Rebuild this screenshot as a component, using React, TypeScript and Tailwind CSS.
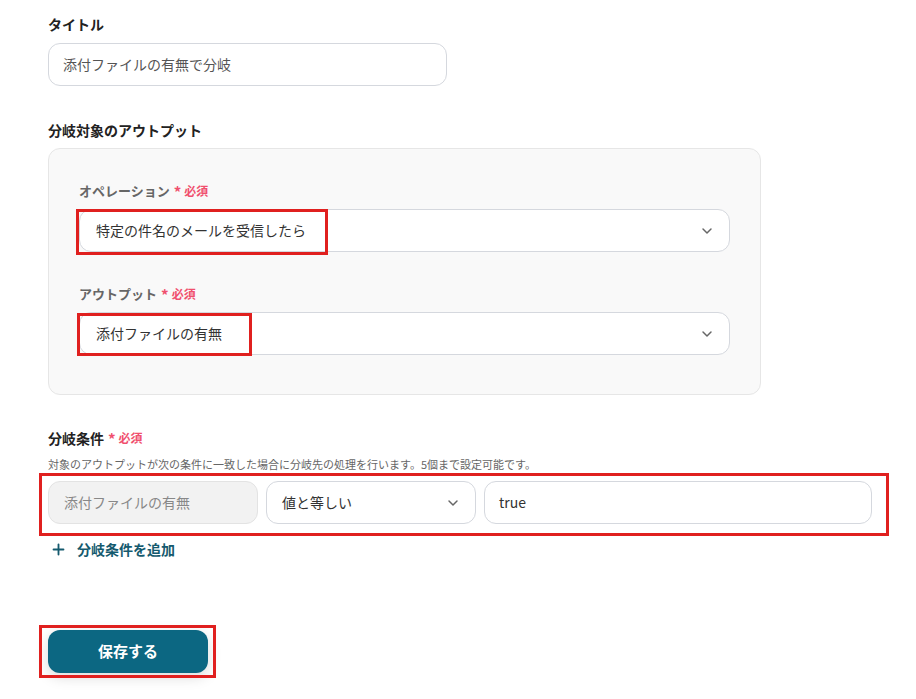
import { ChevronDown, Plus } from "lucide-react";

const font = { fontFamily: '"Noto Sans CJK JP", "Noto Sans", sans-serif' };

function Required() {
  return (
    <span className="ml-1 inline-flex items-center text-[12px] font-bold text-[#f0506e]">
      <span className="mr-[3px] text-[15px] leading-none">*</span>必須
    </span>
  );
}

function Select({ value, box }: { value: string; box: string }) {
  return (
    <div className="relative mt-2 flex h-[43px] w-[651px] items-center justify-between rounded-xl border border-[#d5d8de] bg-white pl-4 pr-[14px]">
      <span className="text-[14px] text-[#333]">{value}</span>
      <ChevronDown size={16} strokeWidth={2.2} className="text-[#666]" />
      <div className={`pointer-events-none absolute border-[3px] border-[#e0201f] ${box}`} />
    </div>
  );
}

export default function App() {
  return (
    <div className="min-h-screen bg-white pl-12 pt-[14px]" style={font}>
      <p className="text-[14px] font-bold leading-5 text-[#222]">タイトル</p>
      <div className="mt-[9px] flex h-[43px] w-[399px] items-center rounded-xl border border-[#d5d8de] px-[14px] text-[14px] text-[#555]">
        添付ファイルの有無で分岐
      </div>

      <p className="mt-[34px] text-[14px] font-bold leading-5 text-[#222]">分岐対象のアウトプット</p>
      <div className="mt-2 h-[247px] w-[713px] rounded-xl border border-[#e6e6e6] bg-[#f9f9f9] pl-[30px] pt-8">
        <p className="flex items-center text-[13px] font-bold leading-5 text-[#666]">
          オペレーション<Required />
        </p>
        <Select value="特定の件名のメールを受信したら" box="-left-[4px] -top-px h-[46px] w-[252px]" />
        <p className="mt-8 flex items-center text-[13px] font-bold leading-5 text-[#666]">
          アウトプット<Required />
        </p>
        <Select value="添付ファイルの有無" box="-left-[3px] top-0 h-[43px] w-[175px]" />
      </div>

      <p className="mt-[33px] flex items-center text-[14px] font-bold leading-5 text-[#222]">
        分岐条件<Required />
      </p>
      <p className="mt-2 text-[11px] leading-4 text-[#666]">
        対象のアウトプットが次の条件に一致した場合に分岐先の処理を行います。5個まで設定可能です。
      </p>
      <div className="relative mt-[9px] flex w-[824px] gap-2">
        <div className="flex h-[43px] w-[210px] items-center rounded-xl border border-[#e3e3e3] bg-[#f2f2f2] px-[15px] text-[14px] text-[#888]">
          添付ファイルの有無
        </div>
        <div className="flex h-[43px] w-[210px] items-center justify-between rounded-xl border border-[#d5d8de] bg-white pl-[15px] pr-[14px] text-[14px] text-[#333]">
          値と等しい
          <ChevronDown size={16} strokeWidth={2.2} className="text-[#666]" />
        </div>
        <div className="flex h-[43px] flex-1 items-center rounded-xl border border-[#d5d8de] bg-white px-[14px] text-[14px] text-[#333]">
          true
        </div>
        <div className="pointer-events-none absolute -left-[9px] -top-2 h-[63px] w-[850px] border-[3px] border-[#e0201f]" />
      </div>

      <button className="ml-[2px] mt-[15px] flex items-center gap-[10px] text-[14px] font-bold text-[#155a6e]">
        <Plus size={17} strokeWidth={2.6} />
        分岐条件を追加
      </button>

      <div className="relative mt-[70px] w-[160px]">
        <button className="flex h-[43px] w-[160px] items-center justify-center rounded-xl bg-[#0c6782] text-[15px] font-bold text-white shadow-[0_4px_14px_rgba(0,0,0,0.15)]">
          保存する
        </button>
        <div className="pointer-events-none absolute -left-[9px] -top-[5px] h-[53px] w-[177px] border-[3px] border-[#e0201f]" />
      </div>
    </div>
  );
}
